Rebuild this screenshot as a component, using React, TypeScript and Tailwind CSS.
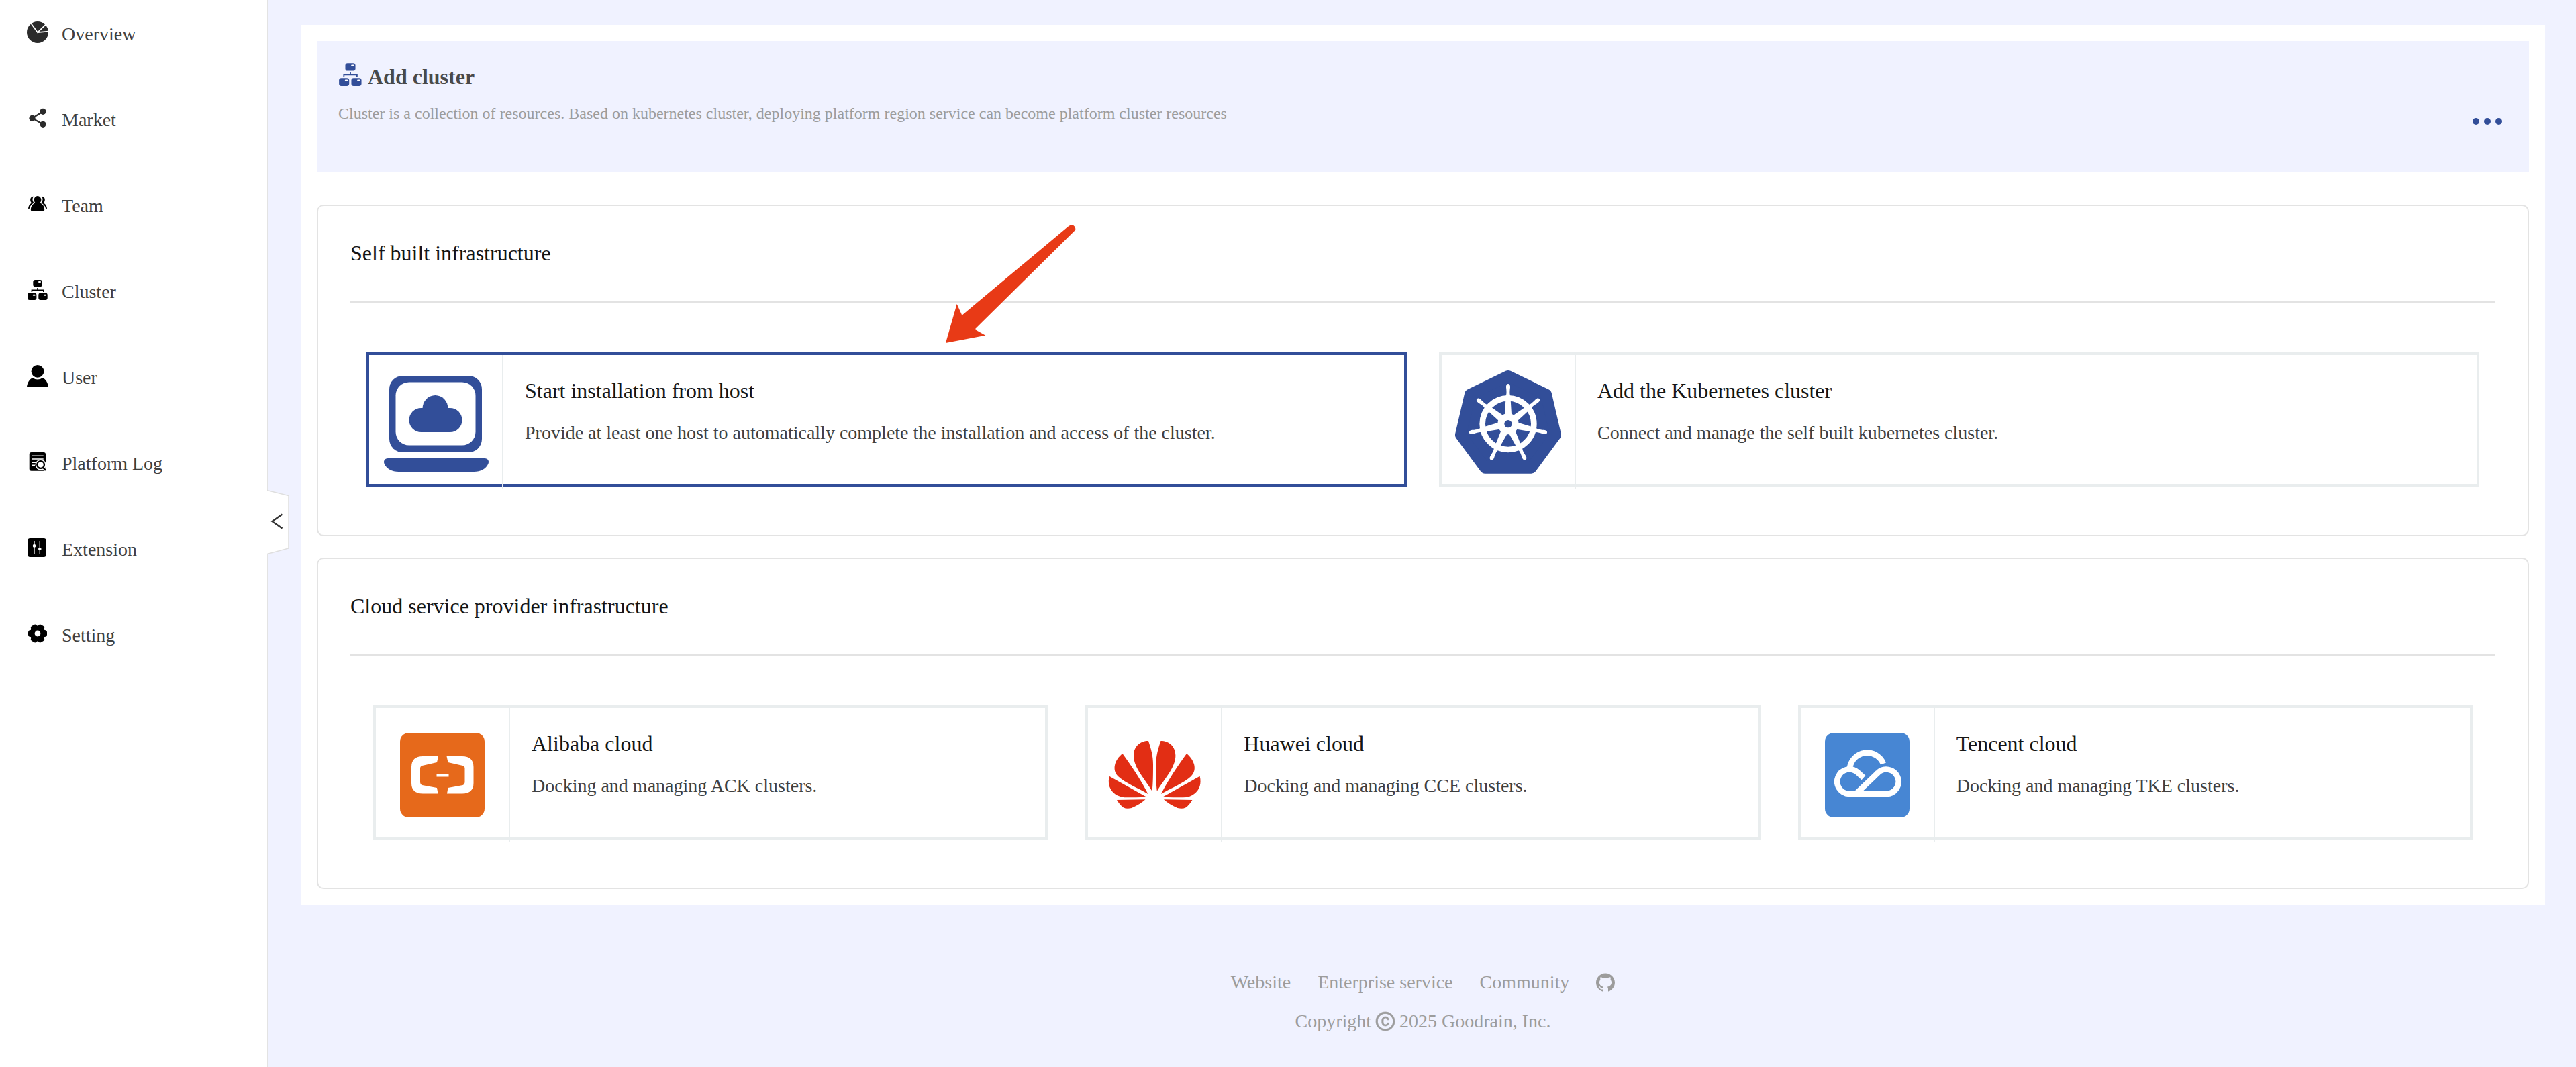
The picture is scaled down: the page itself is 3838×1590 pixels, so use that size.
import type { ReactNode } from "react";
import { AiFillGithub, AiOutlineCopyright } from "react-icons/ai";

const SPOKES = [0, 1, 2, 3, 4, 5, 6];
const LOBES = [0, 60, 120, 180, 240, 300];

function Icon({ children, className = "size-8" }: { children: ReactNode; className?: string }) {
  return (
    <svg viewBox="0 0 32 32" className={`shrink-0 ${className}`} fill="currentColor" aria-hidden="true">
      {children}
    </svg>
  );
}

function OverviewIcon() {
  return (
    <Icon>
      <circle cx="16" cy="16" r="16" fill="#2b2b2b" />
      <path d="M6 2.5L16 16.2L29 3.6M16 16.2L32.5 14.6" fill="none" stroke="#fff" strokeWidth="1.7" />
    </Icon>
  );
}

function MarketIcon() {
  return (
    <Icon>
      <g fill="#2b2b2b" stroke="#2b2b2b">
        <path d="M24 6.3L8 16.3L24 25.3" fill="none" strokeWidth="2.2" />
        <circle cx="8" cy="16.3" r="4.6" stroke="none" />
        <circle cx="24" cy="6.3" r="4.6" stroke="none" />
        <circle cx="24" cy="25.3" r="4.6" stroke="none" />
      </g>
    </Icon>
  );
}

function TeamIcon() {
  return (
    <Icon>
      <ellipse cx="16" cy="9.8" rx="5.4" ry="5.8" />
      <path d="M12.500 14.200H19.500C23.500 16 26.200 19.500 26.200 25Q26.200 26.700 24 26.700H8Q5.800 26.700 5.800 25C5.800 19.500 8.500 16 12.500 14.200Z" />
      <path d="M9.800 4.800C4.500 5 4 11.500 7 14.400C3.500 16.500 2 19.500 2 23.800L4 22.500C4.500 19 7 16.500 10.500 14.200C8 11.500 7.800 8 9.800 4.800Z" />
      <path d="M22.200 4.800C27.500 5 28 11.500 25 14.400C28.500 16.500 30 19.500 30 23.800L28 22.500C27.500 19 25 16.500 21.500 14.200C24 11.500 24.200 8 22.200 4.800Z" />
    </Icon>
  );
}

function ClusterIcon({ className }: { className?: string }) {
  return (
    <Icon className={className}>
      <rect x="9.3" y="1" width="13.4" height="10.2" rx="3" />
      <rect x="1" y="20.600" width="13.400" height="10.400" rx="3" />
      <rect x="17.300" y="20.600" width="13.400" height="10.400" rx="3" />
      <path d="M16 13V16.400M7.400 19V16.400H24.800V19" fill="none" stroke="currentColor" strokeWidth="1.600" />
      <g fill="#fff">
        <rect x="17" y="3" width="4" height="2" rx="1" />
        <rect x="8.700" y="22.700" width="4" height="2" rx="1" />
        <rect x="25" y="22.700" width="4" height="2" rx="1" />
      </g>
    </Icon>
  );
}

function UserIcon() {
  return (
    <Icon>
      <circle cx="16" cy="9.400" r="9.400" />
      <path d="M0 32C1 26 4 21 8.500 19Q16 24 23.500 19C28 21 31 26 32 32Z" />
    </Icon>
  );
}

function LogIcon() {
  return (
    <Icon>
      <rect x="3.700" y="2" width="24.300" height="27.700" rx="3" />
      <path d="M7.300 7.300H24.700M7.300 11.900H24.700M7.300 17.200H13M7.300 21.300H12" fill="none" stroke="#fff" strokeWidth="1.500" />
      <path d="M24 24L29.500 31" stroke="#fff" strokeWidth="5" />
      <circle cx="20.600" cy="20.600" r="8" fill="#fff" />
      <circle cx="20.600" cy="20.600" r="5.300" fill="#fff" stroke="#000" strokeWidth="2.400" />
      <path d="M24.200 24.600L28 29" stroke="#000" strokeWidth="2.600" />
    </Icon>
  );
}

function ExtensionIcon() {
  return (
    <Icon>
      <rect x="1" y="2" width="28" height="28" rx="4" />
      <path d="M11 6V25.300M19.300 6V25.300" stroke="#fff" strokeWidth="1.300" />
      <circle cx="11" cy="13.400" r="2.300" fill="#fff" />
      <circle cx="19.300" cy="18" r="2.300" fill="#fff" />
    </Icon>
  );
}

function SettingIcon() {
  return (
    <Icon>
      <circle cx="16" cy="16" r="11.500" />
      {LOBES.map((angle) => (
        <rect key={angle} x="20" y="11" width="10" height="10" rx="3.500" transform={`rotate(${angle} 16 16)`} />
      ))}
      <circle cx="16" cy="16" r="4.400" fill="#fff" />
    </Icon>
  );
}

function HostLogo() {
  return (
    <svg viewBox="569 549 160 160" className="size-40" fill="#324e99" aria-hidden="true">
      <rect x="580" y="560" width="138" height="114" rx="20" />
      <rect x="589.500" y="569.500" width="119" height="94" rx="20" fill="#fff" />
      <ellipse cx="648.500" cy="609" rx="19" ry="20" />
      <rect x="609.500" y="608" width="79" height="36" rx="18" />
      <path d="M578 683H722C727 683 729 687 727.500 691C724 699 716 703 706 703H594C584 703 576 699 572.500 691C571 687 573 683 578 683Z" />
    </svg>
  );
}

function KubernetesLogo() {
  return (
    <svg viewBox="81 87 480 480" className="size-40" aria-hidden="true">
      <path
        d="M321 121L491 203L533 384L424 532H218L109 384L151 203Z"
        fill="#324e99"
        stroke="#324e99"
        strokeWidth="50"
        strokeLinejoin="round"
      />
      <circle cx="321" cy="335" r="115" fill="none" stroke="#fff" strokeWidth="26" />
      <circle cx="321" cy="335" r="47" fill="#fff" />
      {SPOKES.map((n) => (
        <g key={n} fill="#fff" transform={`rotate(${(n * 360) / 7} 321 335)`}>
          <path d="M310 228H332L338 320H304Z" />
          <path d="M309 212C314 206 315 196 312 172C310 151 332 151 330 172C327 196 328 206 333 212Z" />
        </g>
      ))}
      <circle cx="321" cy="335" r="17" fill="#324e99" />
    </svg>
  );
}

function AlibabaLogo() {
  const bracket =
    "M57 35L55 44L33 49Q30 50 30 53V73Q30 77 33 78L55 82L56.500 90.500H34Q17 90.500 17 75V51Q17 35 34 35Z";
  return (
    <svg viewBox="-17 -17 160 160" className="size-40" aria-hidden="true">
      <rect width="126" height="126" rx="13" fill="#e6691b" />
      <path d={bracket} fill="#fff" />
      <path d={bracket} fill="#fff" transform="matrix(-1 0 0 1 126.500 0)" />
      <rect x="54.500" y="61" width="18" height="4.500" fill="#fff" />
    </svg>
  );
}

function HuaweiPetals() {
  return (
    <>
      <path d="M60 0C64 12 67 22 67 35C67 50 67 62 65.600 75C55 57 38 40 38 22C38 8 48 0 60 0Z" />
      <path d="M21.400 19C34 36 50 60 59.400 79C46 71 24 62 15 53C5 43 10 28 21.400 19Z" />
      <path d="M1.800 52.700L57 83.500C46 84.300 36 84.300 27 84.300C11 84.300 -3 72 1.800 52.700Z" />
      <path d="M13 88L55.500 87.300C48 94 40 98 35 100C27 102 22 100 19 96C17 94 14 90 13 88Z" />
    </>
  );
}

function HuaweiLogo() {
  return (
    <svg viewBox="-11 -29 160 160" className="size-40" fill="#e22e14" aria-hidden="true">
      <HuaweiPetals />
      <g transform="matrix(-1 0 0 1 138.400 0)">
        <HuaweiPetals />
      </g>
    </svg>
  );
}

function TencentLogo() {
  return (
    <svg viewBox="-17 -17 160 160" className="size-40" aria-hidden="true">
      <rect width="126" height="126" rx="13" fill="#4786d3" />
      <g fill="none" stroke="#fff" strokeWidth="8.600">
        <path d="M57.500 67L48.700 59A18.300 18.300 0 1 0 36 91H91A18.200 18.200 0 1 0 78 60.500L45.500 91.500" />
        <path d="M37 53A26 26 0 0 1 87 46" />
      </g>
    </svg>
  );
}

const NAV = [
  { label: "Overview", icon: <OverviewIcon /> },
  { label: "Market", icon: <MarketIcon /> },
  { label: "Team", icon: <TeamIcon /> },
  { label: "Cluster", icon: <ClusterIcon /> },
  { label: "User", icon: <UserIcon /> },
  { label: "Platform Log", icon: <LogIcon /> },
  { label: "Extension", icon: <ExtensionIcon /> },
  { label: "Setting", icon: <SettingIcon /> },
];

function Sidebar() {
  return (
    <aside className="relative w-[400px] shrink-0 border-r-2 border-[#e3e3e3] bg-white">
      <nav className="flex flex-col gap-12 pt-2">
        {NAV.map((item) => (
          <a key={item.label} href="#" className="flex h-20 items-center gap-5 pl-10 text-black">
            {item.icon}
            <span className="pt-1.5 text-[28px] leading-10 text-[#404040]">{item.label}</span>
          </a>
        ))}
      </nav>
      <button type="button" aria-label="Collapse sidebar" className="absolute top-[729px] left-[398px] z-10">
        <svg viewBox="0 0 34 98" className="h-[98px] w-[34px]" aria-hidden="true">
          <path d="M0 1L32 9.500V88L0 97Z" fill="#fff" />
          <path d="M0 1.500L32 9.500V88L0 96.500" fill="none" stroke="#dedede" strokeWidth="1.500" />
          <path d="M22.500 37.500L7.500 48L22.500 58.500" fill="none" stroke="#333" strokeWidth="2.400" />
        </svg>
      </button>
    </aside>
  );
}

type Provider = { title: string; text: string; logo: ReactNode; active?: boolean };

function ProviderCard({ title, text, logo, active }: Provider) {
  return (
    <button
      type="button"
      className={`flex h-[200px] min-w-0 items-start border-4 text-left ${active ? "border-[#324e99]" : "border-[#e9edee]"}`}
    >
      <span className="flex h-[200px] w-[200px] shrink-0 items-center justify-center border-r-2 border-[#e9edee]">
        {logo}
      </span>
      <span className="flex min-w-0 flex-col gap-5 px-8 pt-8">
        <span className="text-[32px] leading-[42px] text-[#151515]">{title}</span>
        <span className="text-[28px] leading-[44px] text-[#404040]">{text}</span>
      </span>
    </button>
  );
}

function Section({ title, children }: { title: string; children: ReactNode }) {
  return (
    <section className="relative rounded-[10px] border-2 border-[#e3e3e3] px-12">
      <h2 className="border-b-2 border-[#e3e3e3] pt-[46px] pb-12 text-[32px] leading-[48px] text-[#151515]">{title}</h2>
      {children}
    </section>
  );
}

function Arrow() {
  return (
    <svg
      viewBox="87 72 582 531"
      className="pointer-events-none absolute top-7 left-[935px] h-[177px] w-[194px]"
      fill="#e83a16"
      aria-hidden="true"
    >
      <path d="M87 600L137 426L160 476L632 82C640 75 648 72 654 73C661 76 666 82 667 90C667 94 665 97 662 100L217 539L265 566Z" />
    </svg>
  );
}

export default function App() {
  return (
    <div className="flex min-h-screen bg-[#f0f2ff] font-['Liberation_Serif',serif]">
      <Sidebar />
      <div className="flex min-w-0 flex-1 flex-col pt-[37px] pr-[46px] pl-12">
        <main className="bg-white p-6">
          <header className="flex items-center justify-between bg-[#f0f2ff] pr-10 pl-8">
            <div className="pt-7 pb-[68px]">
              <div className="flex items-center gap-2">
                <span className="pb-1.5 text-[#324e99]">
                  <ClusterIcon className="size-9" />
                </span>
                <h1 className="text-[32px] leading-[50px] font-bold text-[#494949]">Add cluster</h1>
              </div>
              <p className="mt-2.5 text-[24px] leading-10 text-[#9c9c9c]">
                Cluster is a collection of resources. Based on kubernetes cluster, deploying platform region service can
                become platform cluster resources
              </p>
            </div>
            <button type="button" aria-label="More" className="flex gap-[7px] pt-11">
              <span className="size-2.5 rounded-full bg-[#324e99]" />
              <span className="size-2.5 rounded-full bg-[#324e99]" />
              <span className="size-2.5 rounded-full bg-[#324e99]" />
            </button>
          </header>

          <div className="mt-12 flex flex-col gap-8">
            <Section title="Self built infrastructure">
              <div className="grid grid-cols-2 gap-12 px-6 pt-[74px] pb-[72px]">
                <ProviderCard
                  active
                  title="Start installation from host"
                  text="Provide at least one host to automatically complete the installation and access of the cluster."
                  logo={<HostLogo />}
                />
                <ProviderCard
                  title="Add the Kubernetes cluster"
                  text="Connect and manage the self built kubernetes cluster."
                  logo={<KubernetesLogo />}
                />
              </div>
              <Arrow />
            </Section>

            <Section title="Cloud service provider infrastructure">
              <div className="grid grid-cols-3 gap-14 px-[34px] pt-[74px] pb-[72px]">
                <ProviderCard title="Alibaba cloud" text="Docking and managing ACK clusters." logo={<AlibabaLogo />} />
                <ProviderCard title="Huawei cloud" text="Docking and managing CCE clusters." logo={<HuaweiLogo />} />
                <ProviderCard title="Tencent cloud" text="Docking and managing TKE clusters." logo={<TencentLogo />} />
              </div>
            </Section>
          </div>
        </main>

        <footer className="flex flex-col items-center gap-4 pt-[94px] text-[28px] leading-[42px] text-[#9c9c9c]">
          <div className="flex items-center gap-10">
            <a href="#">Website</a>
            <a href="#">Enterprise service</a>
            <a href="#">Community</a>
            <a href="#" aria-label="GitHub" className="-mx-0.5">
              <AiFillGithub className="size-8" />
            </a>
          </div>
          <div className="flex items-center gap-[5px]">
            Copyright <AiOutlineCopyright className="size-8" strokeWidth="24" /> 2025 Goodrain, Inc.
          </div>
        </footer>
      </div>
    </div>
  );
}
